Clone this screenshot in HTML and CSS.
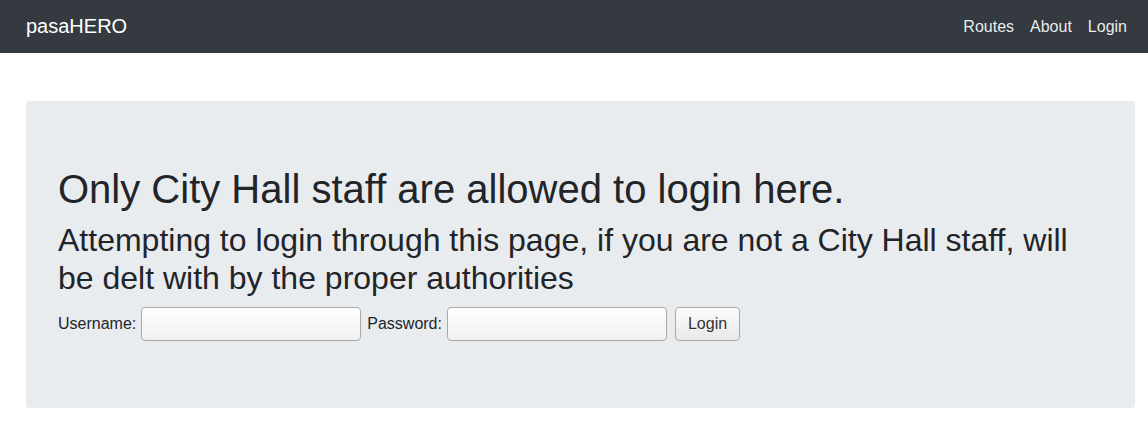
FILE: index.html
```html
<!DOCTYPE html>
<html lang="en">
<head>
<meta charset="utf-8">
<title>pasaHERO</title>
<link rel="stylesheet" href="styles.css">
</head>
<body>
<nav class="navbar">
  <a class="brand" href="#">pasaHERO</a>
  <ul class="nav-links">
    <li><a href="#">Routes</a></li>
    <li><a href="#">About</a></li>
    <li><a href="#">Login</a></li>
  </ul>
</nav>
<main class="jumbotron">
  <h1 class="title">Only City Hall staff are allowed to login here.</h1>
  <h3 class="subtitle">Attempting to login through this page, if you are not a City Hall staff, will be delt with by the proper authorities</h3>
  <form class="login-form">
    <label for="u">Username:</label>
    <input id="u" type="text" class="field">
    <label for="p">Password:</label>
    <input id="p" type="password" class="field">
    <button type="button" class="btn">Login</button>
  </form>
</main>
</body>
</html>
```

FILE: styles.css
```css
* { box-sizing: border-box; }
html, body { margin: 0; padding: 0; }
body {
  font-family: "Liberation Sans", Arial, sans-serif;
  color: #212529;
  background: #fff;
}
.navbar {
  height: 53px;
  background: #343a40;
  display: flex;
  align-items: center;
  justify-content: space-between;
  padding: 0 21px 0 26px;
}
.brand {
  color: #fff;
  font-size: 20px;
  text-decoration: none;
}
.nav-links {
  list-style: none;
  display: flex;
  gap: 16px;
  margin: 0;
  padding: 0;
}
.nav-links a {
  color: rgba(255,255,255,0.92);
  text-decoration: none;
  font-size: 16px;
}
.jumbotron {
  margin: 48px 13px 0 26px;
  background: #e9ecef;
  border-radius: 4px;
  padding: 64px 32px 67px;
}
.title {
  font-size: 40px;
  font-weight: 400;
  line-height: 48px;
  margin: 0 0 8px;
}
.subtitle {
  font-size: 32px;
  font-weight: 400;
  line-height: 38px;
  margin: 0 0 10px;
}
.login-form {
  display: flex;
  align-items: center;
  font-size: 16px;
}
.login-form label { margin-right: 5px; }
.field {
  width: 220px;
  height: 34px;
  border: 1px solid #a9a9a9;
  border-radius: 4px;
  background: linear-gradient(#fff, #f0f0f0);
  margin-right: 6px;
  font: inherit;
}
.btn {
  height: 34px;
  padding: 0 12px;
  border: 1px solid #a9a9a9;
  border-radius: 4px;
  background: linear-gradient(#fcfcfc, #e8e8e8);
  color: #333;
  font: inherit;
  margin-left: 2px;
}
```
